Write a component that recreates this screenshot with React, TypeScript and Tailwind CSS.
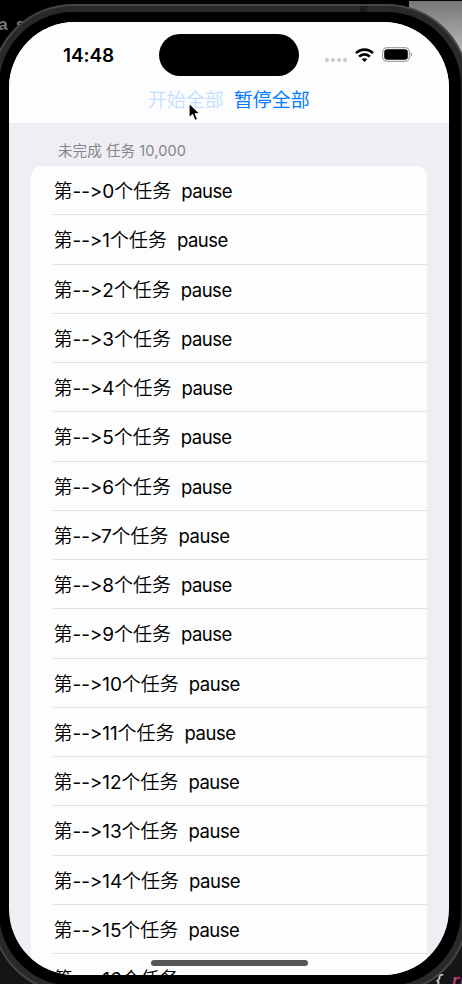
const tasks = Array.from({ length: 17 }, (_, i) => i);

function StatusBar() {
  return (
    <div className="relative h-[62px] shrink-0">
      <div className="flex h-full items-center justify-between pl-[54px] pr-[36px] pt-[4px]">
        <span className="pt-px text-[19px] leading-[24px] font-semibold tracking-[-0.1px] text-black">14:48</span>
        <div className="flex items-center">
          <div className="mr-[8px] mt-[9px] flex gap-[2px]">
            <i className="size-[4px] rounded-full bg-[#c9c9c9]" />
            <i className="size-[4px] rounded-full bg-[#c9c9c9]" />
            <i className="size-[4px] rounded-full bg-[#c9c9c9]" />
            <i className="size-[4px] rounded-full bg-[#c9c9c9]" />
          </div>
          <svg width="19" height="14" viewBox="0 0 19 14" className="mr-[8px] -mt-px">
            <g fill="none" stroke="#000" strokeWidth="2.6">
              <path d="M1 5.2C5.8.4 13.2.4 18 5.2" />
              <path d="M4.1 8.6c3.1-3 7.700-3 10.800 0" />
            </g>
            <path d="M9.500 14 6.700 11.300c1.600-1.500 4-1.500 5.600 0z" />
          </svg>
          <svg width="31" height="15" viewBox="0 0 31 15" className="-mt-px">
            <rect x="0.600" y="0.600" width="26.800" height="13.800" rx="4.500" fill="none" stroke="#a3a3a3" strokeWidth="1.200" />
            <rect x="2.200" y="2.200" width="23.600" height="10.600" rx="3" />
            <path d="M28.700 5.300c1.900.7 1.900 3.700 0 4.400z" fill="#999" />
          </svg>
        </div>
      </div>
      <div className="absolute left-[150px] top-[12px] h-[42px] w-[140px] rounded-full bg-black" />
    </div>
  );
}

function Toolbar() {
  return (
    <div className="relative flex h-[39px] shrink-0 items-start justify-center gap-[10px] pr-[0.500px] pt-[3px] text-[19px] leading-[28px]">
      <button className="font-[350] text-[#c2deff]">开始全部</button>
      <button className="text-[#087aff]">暂停全部</button>
      <svg className="absolute left-[179px] top-[18px]" width="14" height="21" viewBox="0 0 14 21">
        <path d="M1 1v15l3.500-3.200 2.300 5.700 2.900-1.200-2.300-5.500h4.800z" fill="#000" stroke="#fff" strokeWidth="1.200" />
      </svg>
    </div>
  );
}

function TaskRow({ index }: { index: number }) {
  return (
    <div className="ml-[22px] flex h-[49.250px] shrink-0 items-center whitespace-pre border-b border-[#e0e0e0] pl-[0.500px] pt-[4px] text-[19px] leading-[28px] text-black">
      <span className="font-[350]">第</span>
      <span className="font-[370] tracking-[-0.1px]">--&gt;{index}</span>
      <span className="font-[350]">个任务</span>
      <span className="mb-[2px] ml-[10px] text-[18.500px] tracking-[-0.5px]">pause</span>
    </div>
  );
}

export default function App() {
  return (
    <div className="relative h-[984px] w-[462px] overflow-hidden bg-black font-['Inter','Noto_Sans_CJK_SC',sans-serif] [font-feature-settings:'calt'_0]">
      <span className="absolute left-[-2px] top-[16px] whitespace-pre font-['Liberation_Mono',monospace] text-[17px] font-bold leading-[20px] tracking-[-1.500px] text-[#777]">a s</span>
      <div className="absolute right-0 top-[1px] h-[130px] w-[53px] bg-linear-to-b from-[#77777a] to-[#bcbcbc] to-40%" />
      <div className="absolute bottom-0 right-0 h-[100px] w-[90px] bg-[#151518]" />
      <div className="absolute bottom-0 left-0 h-[100px] w-[60px] bg-[#151515]" />
      <span className="absolute left-[435px] top-[971px] whitespace-pre font-['Liberation_Mono',monospace] text-[14px] font-bold italic leading-[20px] text-[#c5c5c5]">{'{ '}<span className="text-[#c6427d]">ru</span></span>
      <div className="relative -ml-[9px] h-full w-[478px] pt-[4px]">
        <div className="h-[990px] rounded-[82px] border-2 border-[#454545] bg-[#292929] p-[6px]">
          <div className="h-full rounded-[74px] bg-black pl-[10px] pr-[12px] pt-[10px]">
            <div className="flex h-[953px] w-[440px] flex-col overflow-hidden rounded-[66px] bg-[#efeef4]">
              <div className="bg-[#fdfdfd]">
                <StatusBar />
                <Toolbar />
              </div>
              <div className="flex h-[43px] shrink-0 items-center whitespace-pre pl-[49px] pt-[12px] text-[14.500px] leading-[20px] tracking-[0.1px] text-[#85858a]">未完成 任务 10,000</div>
              <div className="ml-[22px] flex w-[396px] flex-col overflow-hidden rounded-t-[10px] bg-[#fdfdfd]">
                {tasks.map((index) => <TaskRow key={index} index={index} />)}
              </div>
            </div>
          </div>
        </div>
        <div className="absolute left-[369px] top-[6px] h-[6px] w-[7px] bg-[#1b1b1b]" />
        <div className="absolute left-[160px] top-[960px] h-[6px] w-[157px] rounded-full bg-[#555]" />
      </div>
    </div>
  );
}
